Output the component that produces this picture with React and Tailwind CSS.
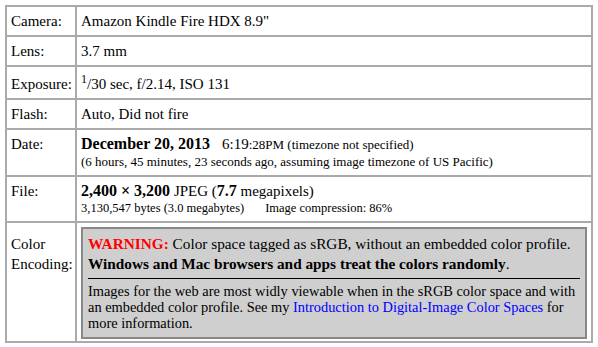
const cell = "border-r-2 border-b-2 border-[#aaaaaa] px-[4px] py-[5px] align-baseline";

function Row({ label, labelClass = "", valueClass = "", children }) {
  return (
    <tr>
      <td className={`${cell} w-[70px] leading-[18px] ${labelClass}`}>{label}</td>
      <td className={`${cell} leading-[18px] ${valueClass}`}>{children}</td>
    </tr>
  );
}

export default function App() {
  return (
    <div className="min-h-[347px] bg-white p-[5px] text-black font-['Liberation_Serif',serif] text-[15px]">
      <table className="w-[588px] table-fixed border-separate border-spacing-0 border-t-2 border-l-2 border-[#aaaaaa]">
        <tbody>
          <Row label="Camera:">Amazon Kindle Fire HDX 8.9"</Row>
          <Row label="Lens:">3.7 mm</Row>
          <Row label="Exposure:" labelClass="pt-[8px]" valueClass="pt-[8px]">
            <sup className="text-[12px]">1</sup>/30 sec, f/2.14, ISO 131
          </Row>
          <Row label="Flash:">Auto, Did not fire</Row>
          <Row label="Date:">
            <div>
              <b className="text-[16px]">December 20, 2013</b>
              <span className="ml-[12px]">6:19</span>
              <span className="text-[13px]">:28PM (timezone not specified)</span>
            </div>
            <div className="text-[13px] leading-[16px]">
              (6 hours, 45 minutes, 23 seconds ago, assuming image timezone of US Pacific)
            </div>
          </Row>
          <Row label="File:">
            <div>
              <b className="text-[16px]">2,400 × 3,200</b> JPEG (<b className="text-[16px]">7.7</b> megapixels)
            </div>
            <div className="text-[12.5px] leading-[16px]">
              3,130,547 bytes (3.0 megabytes)
              <span className="ml-[21px]">Image compression: 86%</span>
            </div>
          </Row>
          <tr>
            <td className={`${cell} w-[70px] leading-[20px]`}>Color Encoding:</td>
            <td className={`${cell} pt-[4px] pb-[2px]`}>
              <div className="border-2 border-[#888888] bg-[#cfcfcf] px-[5px] pt-[5px] pb-[6px]">
                <div className="text-[15.3px] leading-[20px]">
                  <b className="text-[#ff0000]">WARNING:</b> Color space tagged as sRGB, without an embedded color profile.
                </div>
                <div className="text-[15.3px] leading-[20px]">
                  <b>Windows and Mac browsers and apps treat the colors randomly</b>.
                </div>
                <div className="mt-[4px] mb-[4px] border-t border-black" />
                <p className="text-[14.4px] leading-[16px]">
                  Images for the web are most widly viewable when in the sRGB color space and with an embedded color
                  profile. See my <a className="text-[#0000ff]">Introduction to Digital-Image Color Spaces</a> for more
                  information.
                </p>
              </div>
            </td>
          </tr>
        </tbody>
      </table>
    </div>
  );
}
